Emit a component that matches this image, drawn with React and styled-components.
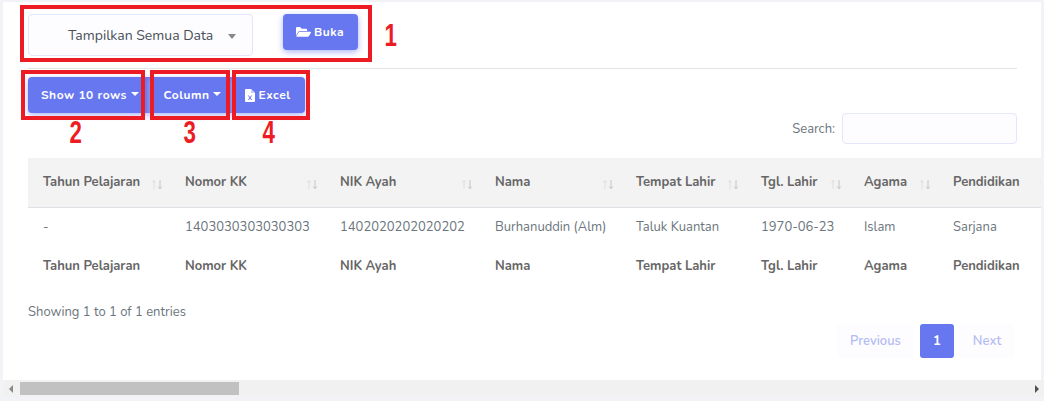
import React from "react";
import styled, { createGlobalStyle } from "styled-components";

const GlobalStyle = createGlobalStyle`
  html, body {
    margin: 0;
    padding: 0;
    height: 401px;
    overflow: hidden;
    background: #f2f3f7;
    font-family: "Nunito", "Lato", "Noto Sans", sans-serif;
    color: #6c757d;
  }
  * { box-sizing: border-box; }
`;

const primary = "#6777ef";

const colunas = [
  { nome: "Tahun Pelajaran", lebar: 142, isi: "-" },
  { nome: "Nomor KK", lebar: 155, isi: "1403030303030303" },
  { nome: "NIK Ayah", lebar: 155, isi: "1402020202020202" },
  { nome: "Nama", lebar: 141, isi: "Burhanuddin (Alm)" },
  { nome: "Tempat Lahir", lebar: 125, isi: "Taluk Kuantan" },
  { nome: "Tgl. Lahir", lebar: 103, isi: "1970-06-23" },
  { nome: "Agama", lebar: 89, isi: "Islam" },
  { nome: "Pendidikan", lebar: 120, isi: "Sarjana" },
];

const SortIcon = () => (
  <SortSvg viewBox="0 0 12 11">
    <path d="M3 10V1.500M1.200 3.400 3 1.300l1.800 2.100" stroke="#dedede" fill="none" />
    <path d="M9 1v8.500M7.200 7.600 9 9.700l1.800-2.100" stroke="#c4c4c4" fill="none" />
  </SortSvg>
);

const FolderIcon = () => (
  <svg width="15" height="12" viewBox="0 0 576 448" fill="#fff">
    <path d="M572.700 252 500.300 376A64 64 0 0 1 445 408H40c-18.500 0-30-20-20.700-36l72.400-124A64 64 0 0 1 147 216h405c18.500 0 30 20 20.700 36zM147 184h281v-40c0-26.500-21.500-48-48-48H220L156 32H48C21.500 32 0 53.500 0 80v278l69-119a96 96 0 0 1 78-55z" />
  </svg>
);

const ExcelIcon = () => (
  <svg width="10" height="13" viewBox="0 0 10 13">
    <path d="M0 1a1 1 0 0 1 1-1h5l4 4v8a1 1 0 0 1-1 1H1a1 1 0 0 1-1-1z" fill="#fff" />
    <path d="M6 0v4h4" fill="#c9cef8" />
    <path d="M3.300 6.500 6.700 11M6.700 6.500 3.300 11" stroke={primary} strokeWidth="1" />
  </svg>
);

export default function App() {
  return (
    <>
      <GlobalStyle />
      <Page>
        <Card>
          <TopBar>
            <SelectBox>
              <span>Tampilkan Semua Data</span>
              <Caret />
            </SelectBox>
            <OpenButton>
              <FolderIcon />
              Buka
            </OpenButton>
          </TopBar>
          <Divider />
          <ButtonRow>
            <GroupButton $w={122} $first $shift={2}>
              Show 10 rows <SmallCaret />
            </GroupButton>
            <GroupButton $w={82} $shift={3}>
              Column <SmallCaret />
            </GroupButton>
            <GroupButton $w={73} $last $shift={-2}>
              <ExcelIcon />
              Excel
            </GroupButton>
          </ButtonRow>
          <SearchRow>
            <label>Search:</label>
            <SearchInput />
          </SearchRow>
          <TableWrap>
            <Table>
              <colgroup>
                {colunas.map((c) => <col key={c.nome} style={{ width: c.lebar }} />)}
              </colgroup>
              <thead>
                <tr>
                  {colunas.map((c) => (
                    <HeadCell key={c.nome}>
                      <HeadInner>
                        {c.nome}
                        <SortIcon />
                      </HeadInner>
                    </HeadCell>
                  ))}
                </tr>
              </thead>
              <tbody>
                <tr>
                  {colunas.map((c) => <BodyCell key={c.nome}>{c.isi}</BodyCell>)}
                </tr>
              </tbody>
              <tfoot>
                <tr>
                  {colunas.map((c) => <FootCell key={c.nome}>{c.nome}</FootCell>)}
                </tr>
              </tfoot>
            </Table>
          </TableWrap>
          <Info>Showing 1 to 1 of 1 entries</Info>
          <Pagination>
            <PageLink $w={77} $disabled>Previous</PageLink>
            <PageLink $w={34} $active>1</PageLink>
            <PageLink $w={54} $disabled>Next</PageLink>
          </Pagination>

          {/* annotation overlay, coordinates relative to the card */}
          <Marker $x={17} $y={3} $w={352} $h={57} />
          <Marker $x={18} $y={68} $w={124} $h={50} />
          <Marker $x={147} $y={68} $w={80} $h={50} />
          <Marker $x={229} $y={68} $w={78} $h={50} />
          <MarkerNumber $x={379} $y={19}>1</MarkerNumber>
          <MarkerNumber $x={64} $y={116}>2</MarkerNumber>
          <MarkerNumber $x={178} $y={116}>3</MarkerNumber>
          <MarkerNumber $x={257} $y={116}>4</MarkerNumber>
        </Card>
        <ScrollBar>
          <ScrollArrow $left />
          <ScrollThumb />
          <ScrollArrow />
        </ScrollBar>
      </Page>
    </>
  );
}

const Page = styled.div`
  width: 1044px;
  height: 401px;
  padding: 2px 3px 4px 3px;
  display: flex;
  flex-direction: column;
`;

const Card = styled.div`
  flex: 1;
  min-height: 0;
  background: #fff;
  padding: 12px 0 0 25px;
  position: relative;
  overflow: hidden;
`;

const TopBar = styled.div`
  display: flex;
  align-items: flex-start;
  gap: 30px;
  height: 54px;
`;

const SelectBox = styled.div`
  width: 225px;
  height: 42px;
  background: #fdfdff;
  border: 1px solid #e4e6fc;
  border-radius: 4px;
  padding: 0 16px 0 39px;
  display: flex;
  align-items: center;
  justify-content: space-between;
  font-size: 14px;
  color: #495057;
`;

const Caret = styled.i`
  width: 0;
  height: 0;
  border-left: 4px solid transparent;
  border-right: 4px solid transparent;
  border-top: 5px solid #888;
  margin-top: 2px;
`;

const OpenButton = styled.button`
  width: 75px;
  height: 36px;
  border: 0;
  border-radius: 4px;
  background: ${primary};
  box-shadow: 0 2px 6px #acb5f6;
  color: #fff;
  font: 700 12px "Nunito", "Lato", sans-serif;
  letter-spacing: 0.5px;
  display: flex;
  align-items: center;
  justify-content: center;
  gap: 3px;
  padding: 0 1px 0 0;
`;

const Divider = styled.hr`
  width: 989px;
  margin: 0;
  border: 0;
  border-top: 1px solid #e3e3e3;
`;

const ButtonRow = styled.div`
  display: flex;
  margin-top: 8px;
  height: 36px;
`;

const GroupButton = styled.button`
  width: ${(p) => p.$w}px;
  height: 36px;
  border: 0;
  border-radius: ${(p) => (p.$first ? "4px 0 0 4px" : p.$last ? "0 4px 4px 0" : "0")};
  background: ${primary};
  box-shadow: 0 2px 6px #acb5f6;
  color: #fff;
  font: 700 12px "Nunito", "Lato", sans-serif;
  letter-spacing: 0.5px;
  display: flex;
  align-items: center;
  justify-content: center;
  gap: 4px;
  padding: 0 0 0 ${(p) => Math.max(p.$shift, 0)}px;
  padding-right: ${(p) => Math.max(-p.$shift, 0)}px;
`;

const SmallCaret = styled.i`
  width: 0;
  height: 0;
  margin-bottom: 3px;
  border-left: 4px solid transparent;
  border-right: 4px solid transparent;
  border-top: 4px solid #fff;
`;

const SearchRow = styled.div`
  width: 989px;
  display: flex;
  justify-content: flex-end;
  align-items: center;
  gap: 7px;
  font-size: 13px;
  height: 31px;
`;

const SearchInput = styled.input`
  width: 175px;
  height: 31px;
  background: #fdfdff;
  border: 1px solid #e4e6fc;
  border-radius: 4px;
`;

const TableWrap = styled.div`
  margin-top: 14px;
  overflow: hidden;
`;

const Table = styled.table`
  table-layout: fixed;
  width: 1030px;
  border-collapse: collapse;
  font-size: 13px;
`;

const HeadCell = styled.th`
  height: 49px;
  padding: 0 0 1px 15px;
  background: #f3f3f3;
  border-bottom: 1px solid #dee2e6;
  color: #666;
  font-weight: 700;
  text-align: left;
  white-space: nowrap;
`;

const HeadInner = styled.div`
  display: flex;
  justify-content: space-between;
  align-items: center;
`;

const SortSvg = styled.svg`
  width: 12px;
  height: 11px;
  margin: 5px 7px 0 0;
  flex-shrink: 0;
`;

const BodyCell = styled.td`
  height: 39px;
  padding: 1px 0 0 15px;
  white-space: nowrap;
  color: #6c757d;
`;

const FootCell = styled.td`
  height: 40px;
  padding: 0 0 0 15px;
  font-weight: 700;
  color: #666;
  white-space: nowrap;
`;

const Info = styled.div`
  font-size: 13px;
  margin-top: 17px;
  line-height: 18px;
`;

const Pagination = styled.div`
  width: 986px;
  margin-top: 3px;
  display: flex;
  justify-content: flex-end;
  gap: 6px;
`;

const PageLink = styled.div`
  width: ${(p) => p.$w}px;
  height: 34px;
  border-radius: 3px;
  display: flex;
  align-items: center;
  justify-content: center;
  font-size: 13px;
  font-weight: ${(p) => (p.$active ? 700 : 600)};
  background: ${(p) => (p.$active ? primary : "#fdfdff")};
  color: ${(p) => (p.$active ? "#fff" : "#b4bbf5")};
`;

const ScrollBar = styled.div`
  height: 17px;
  margin: 0 -3px 0 0;
  background: #f1f1f1;
  display: flex;
  align-items: center;
  padding: 0 5px 0 6px;
`;

const ScrollArrow = styled.i`
  width: 0;
  height: 0;
  border-top: 4px solid transparent;
  border-bottom: 4px solid transparent;
  ${(p) => (p.$left ? "border-right: 4px solid #8a8a8a;" : "border-left: 4px solid #505050; margin-left: auto;")}
`;

const ScrollThumb = styled.div`
  width: 219px;
  height: 13px;
  margin-left: 7px;
  background: #c1c1c1;
`;

const Marker = styled.div`
  position: absolute;
  left: ${(p) => p.$x}px;
  top: ${(p) => p.$y}px;
  width: ${(p) => p.$w}px;
  height: ${(p) => p.$h}px;
  border: 4px solid #ed1c24;
  pointer-events: none;
`;

const MarkerNumber = styled.span`
  position: absolute;
  left: ${(p) => p.$x}px;
  top: ${(p) => p.$y}px;
  color: #ed1c24;
  font: 700 31px "Liberation Sans", sans-serif;
  line-height: 30px;
  transform: scaleX(0.72);
`;
